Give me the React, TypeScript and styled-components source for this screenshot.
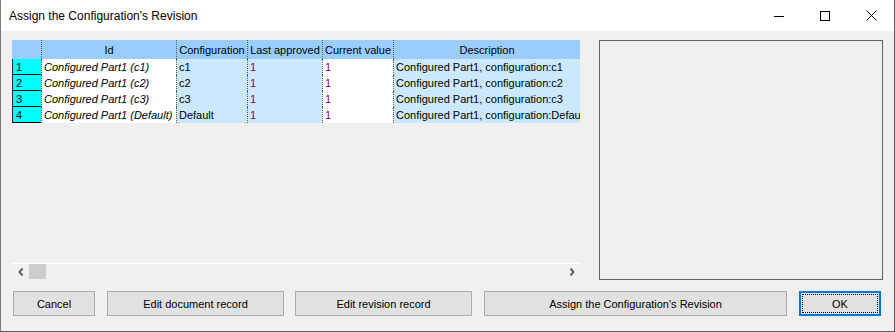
import { Fragment } from 'react';
import styled, { createGlobalStyle } from 'styled-components';

const GlobalStyle = createGlobalStyle`
  html, body {
    margin: 0;
    padding: 0;
    background: #ffffff;
  }
  * {
    box-sizing: border-box;
  }
`;

const Window = styled.div`
  width: 895px;
  height: 332px;
  display: flex;
  flex-direction: column;
  background: #f0f0f0;
  border-left: 1px solid #7a7a7a;
  border-right: 1px solid #5a5a5a;
  border-bottom: 1px solid #5a5a5a;
  font-family: 'Liberation Sans', Arial, sans-serif;
  overflow: hidden;
`;

const TitleBar = styled.div`
  height: 31px;
  flex: none;
  display: flex;
  align-items: center;
  background: #ffffff;
`;

const Title = styled.div`
  flex: 1;
  padding-left: 8px;
  font-size: 12px;
  color: #000000;
`;

const CaptionButton = styled.div`
  width: 46px;
  height: 31px;
  display: grid;
  place-items: center;
`;

const Body = styled.div`
  flex: 1;
  display: flex;
  flex-direction: column;
  padding: 9px 11px 0 11px;
`;

const Main = styled.div`
  display: flex;
  gap: 19px;
  align-items: flex-start;
`;

const GridArea = styled.div`
  width: 568px;
  height: 239px;
  display: flex;
  flex-direction: column;
`;

const Table = styled.div`
  display: grid;
  grid-template-columns: 29px 135px 71px 75px 71px 187px;
  grid-auto-rows: 16px;
  grid-template-rows: 19px;
  font-size: 11px;
`;

const HeadCell = styled.div<{ $first?: boolean }>`
  background: #99ccff;
  display: flex;
  align-items: center;
  justify-content: center;
  white-space: nowrap;
  overflow: hidden;
  color: #000000;
  border-left: ${(p) => (p.$first ? 'none' : '1px dotted #5a5a5a')};
`;

const RowHead = styled.div`
  background: #00ffff;
  border-bottom: 1px solid #000000;
  border-left: 1px solid #2a2a2a;
  display: flex;
  align-items: center;
  padding-left: 3px;
  color: #000000;
`;

const Cell = styled.div<{ $tint?: boolean; $italic?: boolean; $num?: boolean }>`
  background: ${(p) => (p.$tint ? '#cce8ff' : '#ffffff')};
  border-left: 1px dotted #5a5a5a;
  display: flex;
  align-items: center;
  padding-left: 2px;
  white-space: nowrap;
  overflow: hidden;
  font-style: ${(p) => (p.$italic ? 'italic' : 'normal')};
  color: ${(p) => (p.$num ? '#800080' : '#000000')};
`;

const Spacer = styled.div`
  flex: 1;
`;

const HScroll = styled.div`
  height: 16px;
  border-top: 1px solid #ffffff;
  display: flex;
  align-items: stretch;
`;

const ScrollArrow = styled.div`
  width: 17px;
  display: grid;
  place-items: center;
`;

const Thumb = styled.div`
  width: 17px;
  background: #cdcdcd;
`;

const Preview = styled.div`
  width: 284px;
  height: 240px;
  border: 1px solid #646464;
  background: #f0f0f0;
`;

const ButtonRow = styled.div`
  display: flex;
  margin-top: 11px;
  padding-left: 1px;
`;

const Button = styled.div<{ $w: number; $gap?: number; $default?: boolean }>`
  width: ${(p) => p.$w}px;
  height: 25px;
  margin-left: ${(p) => p.$gap ?? 0}px;
  background: #e1e1e1;
  border: ${(p) => (p.$default ? '2px solid #0078d7' : '1px solid #adadad')};
  display: flex;
  align-items: center;
  justify-content: center;
  font-size: 11px;
  color: #000000;
  padding: ${(p) => (p.$default ? '1px' : '0')};
`;

const Focus = styled.div`
  flex: 1;
  align-self: stretch;
  border: 1px dotted #000000;
  display: flex;
  align-items: center;
  justify-content: center;
`;

const rows = [
  { id: 'Configured Part1 (c1)', cfg: 'c1', desc: 'Configured Part1, configuration:c1' },
  { id: 'Configured Part1 (c2)', cfg: 'c2', desc: 'Configured Part1, configuration:c2' },
  { id: 'Configured Part1 (c3)', cfg: 'c3', desc: 'Configured Part1, configuration:c3' },
  { id: 'Configured Part1 (Default)', cfg: 'Default', desc: 'Configured Part1, configuration:Default' },
];

const App = () => (
  <>
    <GlobalStyle />
    <Window>
      <TitleBar>
        <Title>Assign the Configuration's Revision</Title>
        <CaptionButton>
          <svg width='10' height='10' viewBox='0 0 10 10'>
            <line x1='0' y1='5.5' x2='10' y2='5.5' stroke='#000' strokeWidth='1' />
          </svg>
        </CaptionButton>
        <CaptionButton>
          <svg width='10' height='10' viewBox='0 0 10 10'>
            <rect x='0.5' y='0.5' width='9' height='9' fill='none' stroke='#000' strokeWidth='1' />
          </svg>
        </CaptionButton>
        <CaptionButton>
          <svg width='11' height='11' viewBox='0 0 11 11'>
            <path d='M0.5 0.5 L10.5 10.5 M10.5 0.5 L0.5 10.5' stroke='#000' strokeWidth='1' />
          </svg>
        </CaptionButton>
      </TitleBar>
      <Body>
        <Main>
          <GridArea>
            <Table>
              <HeadCell $first />
              <HeadCell>Id</HeadCell>
              <HeadCell>Configuration</HeadCell>
              <HeadCell>Last approved</HeadCell>
              <HeadCell>Current value</HeadCell>
              <HeadCell>Description</HeadCell>
              {rows.map((r, i) => (
                <Fragment key={r.cfg}>
                  <RowHead>{i + 1}</RowHead>
                  <Cell $italic>{r.id}</Cell>
                  <Cell $tint>{r.cfg}</Cell>
                  <Cell $tint $num>1</Cell>
                  <Cell $num>1</Cell>
                  <Cell $tint>{r.desc}</Cell>
                </Fragment>
              ))}
            </Table>
            <Spacer />
            <HScroll>
              <ScrollArrow>
                <svg width='6' height='8' viewBox='0 0 6 8'>
                  <path d='M4.5 0.5 L1.5 4 L4.5 7.5' fill='none' stroke='#606060' strokeWidth='2' />
                </svg>
              </ScrollArrow>
              <Thumb />
              <Spacer />
              <ScrollArrow>
                <svg width='6' height='8' viewBox='0 0 6 8'>
                  <path d='M1.5 0.5 L4.5 4 L1.5 7.5' fill='none' stroke='#606060' strokeWidth='2' />
                </svg>
              </ScrollArrow>
            </HScroll>
          </GridArea>
          <Preview />
        </Main>
        <ButtonRow>
          <Button $w={82}>Cancel</Button>
          <Button $w={177} $gap={12}>Edit document record</Button>
          <Button $w={177} $gap={11}>Edit revision record</Button>
          <Button $w={303} $gap={12}>Assign the Configuration's Revision</Button>
          <Button $w={82} $gap={12} $default>
            <Focus>OK</Focus>
          </Button>
        </ButtonRow>
      </Body>
    </Window>
  </>
);

export default App;
